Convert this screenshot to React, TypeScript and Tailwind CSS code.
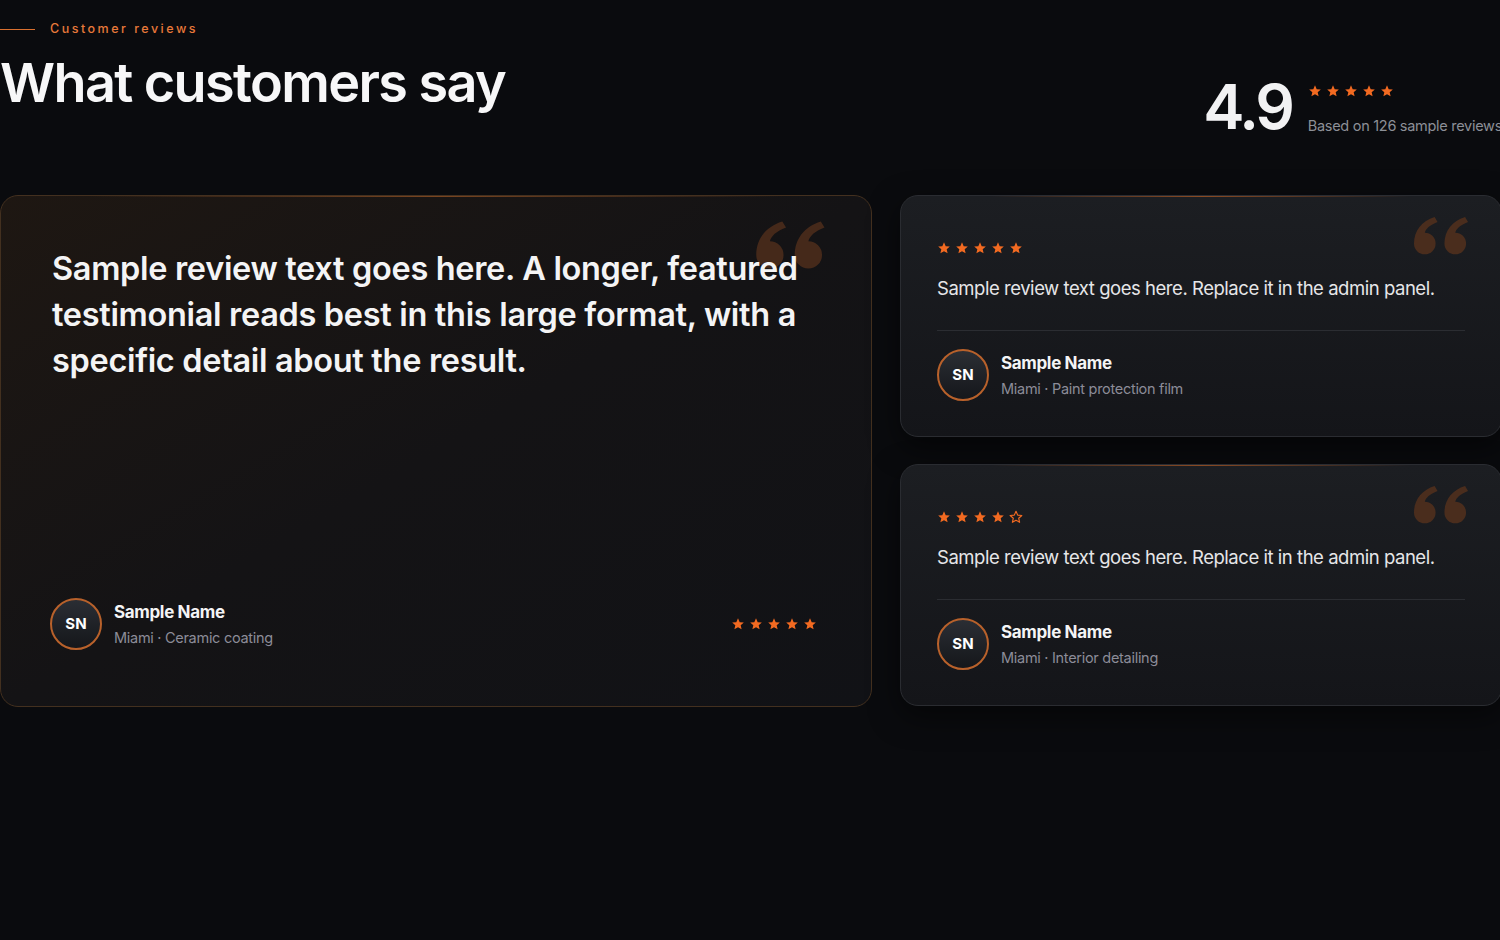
import React from "react";

const FONT = "font-['Inter','Noto_Sans',sans-serif]";

function Star({filled = true, size = 14}: {filled?: boolean, size?: number}) {
  return (
    <svg width={size} height={size} viewBox="0 0 24 24" className="shrink-0">
      <path
        d="M12 2.2l2.9 6.6 7.1.6-5.4 4.7 1.6 7-6.2-3.7-6.2 3.7 1.6-7L2 9.4l7.1-.6z"
        fill={filled ? "#f26a21" : "none"}
        stroke="#f26a21"
        strokeWidth={filled ? 0 : 2}
        strokeLinejoin="round"
      />
    </svg>
  );
}

function Stars({count = 5, filled = 5, size = 14}: {count?: number, filled?: number, size?: number}) {
  return (
    <div className="flex items-center gap-[4px]">
      {Array.from({length: count}).map((_, i) => (
        <Star key={i} filled={i < filled} size={size}/>
      ))}
    </div>
  );
}

function QuoteMark({className}: {className?: string}) {
  const half = "M1 28C1 15 9 5 22 1l3 5c-8 3-12 7-13 11A11 11 0 1 1 1 28z";
  return (
    <svg viewBox="0 0 58 40" className={className}>
      <path d={half} fill="currentColor"/>
      <path d={half} fill="currentColor" transform="translate(31 0)"/>
    </svg>
  );
}

function Avatar() {
  return (
    <div className="w-[52px] h-[52px] rounded-full border-2 border-[#b8612b] bg-gradient-to-b from-[#2b2e34] to-[#15171b] flex items-center justify-center shrink-0">
      <span className="text-[15px] font-bold text-white">SN</span>
    </div>
  );
}

function Author({place}: {place: string}) {
  return (
    <div className="flex items-center gap-[12px]">
      <Avatar/>
      <div className="flex flex-col">
        <span className="text-[17px] font-bold text-[#f4f4f5] leading-[24px] tracking-[-0.02em]">Sample Name</span>
        <span className="text-[14.5px] text-[#8c8c98] leading-[20px] mt-[4px] tracking-[-0.02em]">Miami · {place}</span>
      </div>
    </div>
  );
}

function SmallCard({filled, place}: {filled: number, place: string}) {
  return (
    <div className="relative h-[242px] rounded-[18px] border border-[#2a2c31] bg-gradient-to-b from-[#1c1e22] to-[#141519] px-[36px] pt-[45px] overflow-hidden shadow-[0_10px_30px_rgba(0,0,0,0.5)]">
      <div className="absolute top-0 left-[15%] right-[15%] h-px bg-gradient-to-r from-transparent via-[#8a4a22] to-transparent"/>
      <QuoteMark className="absolute top-[20px] right-[31px] w-[57px] text-[#4a2d1d]"/>
      <Stars filled={filled} size={14}/>
      <p className="mt-[20px] text-[18.5px] text-[#e6e6e8] leading-[26px] tracking-[-0.025em]">
        Sample review text goes here. Replace it in the admin panel.
      </p>
      <div className="mt-[29px] h-px bg-[#2b2d32]"/>
      <div className="mt-[18px]">
        <Author place={place}/>
      </div>
    </div>
  );
}

export default function App() {
  return (
    <div className={`min-h-screen w-full bg-[#0a0b0e] overflow-hidden ${FONT}`}>
      <div className="w-[1502px] pt-[20px]">
        <div className="flex justify-between items-start">
          <div className="flex flex-col">
            <div className="flex items-center gap-[15px]">
              <div className="w-[35px] h-px bg-[#d9702f]"/>
              <span className="text-[12.5px] font-medium tracking-[0.2em] text-[#e8793a]">Customer reviews</span>
            </div>
            <h1 className="mt-[12px] text-[54px] font-semibold text-[#f7f7f8] leading-[64px] tracking-[-0.03em]">
              What customers say
            </h1>
          </div>
          <div className="flex items-center gap-[16px] mt-[56px]">
            <span className="text-[62px] font-semibold text-[#f2f2f3] leading-[62px] tracking-[-0.05em]">4.9</span>
            <div className="flex flex-col gap-[17px] mt-[6px]">
              <Stars size={14}/>
              <span className="text-[14.5px] text-[#8d9097] tracking-[-0.02em]">Based on 126 sample reviews</span>
            </div>
          </div>
        </div>

        <div className="mt-[57px] grid grid-cols-[872px_1fr] gap-[28px]">
          <div className="relative h-[512px] rounded-[18px] border border-[#43301f] bg-gradient-to-br from-[#1e1712] via-[#141315] to-[#111216] pl-[51px] pr-[40px] pt-[50px] pb-[52px] flex flex-col justify-between overflow-hidden">
            <div className="absolute top-0 left-[10%] right-[10%] h-px bg-gradient-to-r from-transparent via-[#7a4520] to-transparent"/>
            <QuoteMark className="absolute top-[22px] right-[44px] w-[72px] h-[54px] text-[#45291a]"/>
            <p className="relative text-[32.5px] font-semibold text-[#f4f4f5] leading-[46px] tracking-[-0.01em] max-w-[780px]">
              Sample review text goes here. A longer, featured testimonial reads best in this large format, with a specific detail about the result.
            </p>
            <div className="flex items-center justify-between pr-[14px] mb-[4px] -ml-[2px]">
              <Author place="Ceramic coating"/>
              <Stars size={14}/>
            </div>
          </div>
          <div className="flex flex-col gap-[27px]">
            <SmallCard filled={5} place="Paint protection film"/>
            <SmallCard filled={4} place="Interior detailing"/>
          </div>
        </div>
      </div>
    </div>
  );
}
